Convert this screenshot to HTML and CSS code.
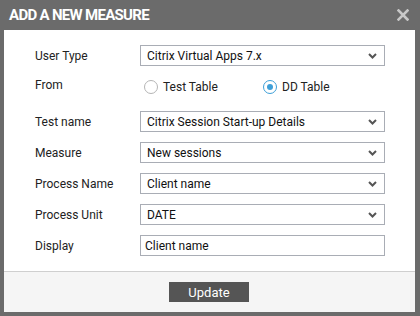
FILE: index.html
```html
<!DOCTYPE html>
<html>
<head>
<meta charset="utf-8">
<link rel="stylesheet" href="styles.css">
</head>
<body>
<div class="dialog">
  <div class="header">
    <span class="title">ADD A NEW MEASURE</span>
    <svg class="close" width="12" height="12" viewBox="0 0 12 12"><path d="M1.5 1.5 L10.5 10.5 M10.5 1.5 L1.5 10.5" stroke="#c8c8c8" stroke-width="2.6" stroke-linecap="square"/></svg>
  </div>
  <div class="body">
    <div class="row">
      <div class="label">User Type</div>
      <div class="select"><span>Citrix Virtual Apps 7.x</span><svg class="chev" width="9" height="6" viewBox="0 0 9 6"><path d="M1 1 L4.5 4.5 L8 1" fill="none" stroke="#555" stroke-width="2"/></svg></div>
    </div>
    <div class="row radio-row">
      <div class="label from">From</div>
      <div class="radios">
        <div class="radio"><span class="circle"></span><span>Test Table</span></div>
        <div class="radio checked"><span class="circle"></span><span>DD Table</span></div>
      </div>
    </div>
    <div class="row">
      <div class="label">Test name</div>
      <div class="select"><span>Citrix Session Start-up Details</span><svg class="chev" width="9" height="6" viewBox="0 0 9 6"><path d="M1 1 L4.5 4.5 L8 1" fill="none" stroke="#555" stroke-width="2"/></svg></div>
    </div>
    <div class="row">
      <div class="label">Measure</div>
      <div class="select"><span>New sessions</span><svg class="chev" width="9" height="6" viewBox="0 0 9 6"><path d="M1 1 L4.5 4.5 L8 1" fill="none" stroke="#555" stroke-width="2"/></svg></div>
    </div>
    <div class="row">
      <div class="label">Process Name</div>
      <div class="select"><span>Client name</span><svg class="chev" width="9" height="6" viewBox="0 0 9 6"><path d="M1 1 L4.5 4.5 L8 1" fill="none" stroke="#555" stroke-width="2"/></svg></div>
    </div>
    <div class="row">
      <div class="label">Process Unit</div>
      <div class="select"><span>DATE</span><svg class="chev" width="9" height="6" viewBox="0 0 9 6"><path d="M1 1 L4.5 4.5 L8 1" fill="none" stroke="#555" stroke-width="2"/></svg></div>
    </div>
    <div class="row">
      <div class="label">Display</div>
      <div class="input">Client name</div>
    </div>
  </div>
  <div class="footer">
    <button class="btn">Update</button>
  </div>
</div>
</body>
</html>
```

FILE: styles.css
```css
html, body {
  margin: 0;
  padding: 0;
}
body {
  background: #6b6b6b;
  font-family: Roboto, "Liberation Sans", sans-serif;
  width: 420px;
  height: 316px;
  overflow: hidden;
}
.dialog {
  display: flex;
  flex-direction: column;
  height: 312px;
}
.header {
  height: 30px;
  display: flex;
  align-items: center;
  justify-content: space-between;
  padding: 0 11px 0 9px;
}
.title {
  color: #fff;
  font-weight: bold;
  font-size: 15px;
  letter-spacing: -0.7px;
}
.close {
  display: block;
}
.body {
  background: #fff;
  margin: 0 5px 0 4px;
  padding: 15px 0 5px 31px;
  flex: 1;
}
.row {
  display: flex;
  align-items: center;
  height: 21px;
  margin-bottom: 10px;
}
.label {
  width: 105px;
  font-size: 12px;
  color: #222;
}
.radio-row {
  height: 25px;
  align-items: flex-start;
}
.from {
  padding-top: 2px;
}
.radios {
  display: flex;
  padding-top: 4px;
  padding-left: 4px;
}
.radio {
  display: flex;
  align-items: center;
  font-size: 12px;
  color: #222;
  width: 119px;
}
.circle {
  box-sizing: border-box;
  width: 14px;
  height: 14px;
  border-radius: 50%;
  border: 1px solid #b5b5b5;
  margin-right: 5px;
  position: relative;
}
.checked .circle {
  border: 1.5px solid #3d9fd8;
}
.checked .circle::after {
  content: "";
  position: absolute;
  left: 2.5px;
  top: 2.5px;
  width: 6px;
  height: 6px;
  border-radius: 50%;
  background: #3d9fd8;
}
.select, .input {
  box-sizing: border-box;
  width: 245px;
  height: 21px;
  border: 1px solid #a9adb5;
  display: flex;
  align-items: center;
  justify-content: space-between;
  font-size: 12px;
  color: #111;
  padding: 0 7px 0 6px;
}
.input {
  padding-left: 4px;
}
.chev {
  display: block;
}
.footer {
  border-top: 1px solid #cfcfcf;
  background: #f5f5f5;
  height: 40px;
  margin: 0 5px 0 4px;
  display: flex;
  align-items: center;
  justify-content: center;
}
.btn {
  width: 80px;
  height: 20px;
  background: #555;
  color: #fff;
  border: none;
  font-family: Roboto, "Liberation Sans", sans-serif;
  font-size: 13px;
  padding: 0;
  margin-left: -1px;
}
```
